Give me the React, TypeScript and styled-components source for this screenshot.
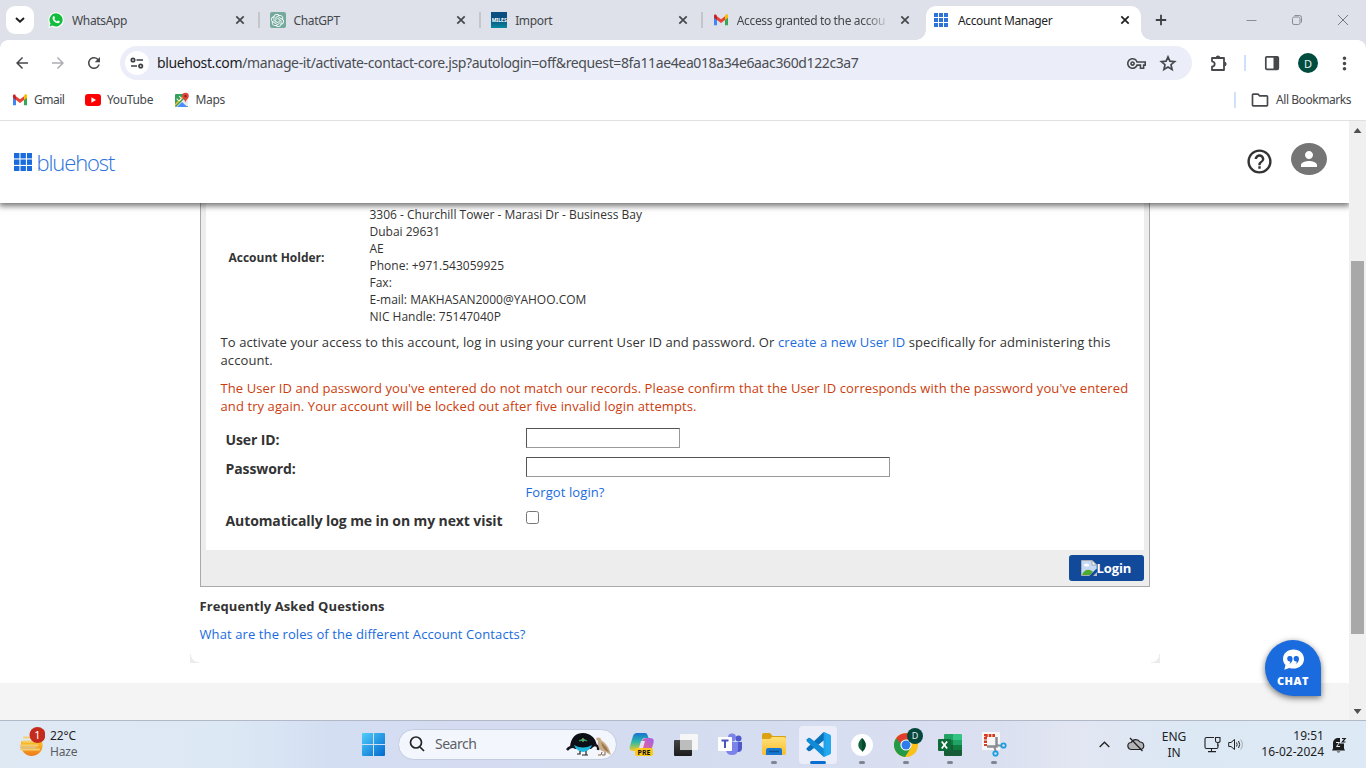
import React from "react";
import styled, { createGlobalStyle } from "styled-components";
import {
  MdArrowBack,
  MdArrowForward,
  MdRefresh,
  MdMoreVert,
  MdOutlineVpnKey,
  MdHelpOutline,
  MdPerson,
  MdOutlineFolder,
} from "react-icons/md";
import { SiOpenai } from "react-icons/si";

const Global = createGlobalStyle`
  * { box-sizing: border-box; }
  body { margin: 0; overflow: hidden; background: #fff; }
  svg { display: block; flex: none; }
`;

const Screen = styled.div`
  width: 1366px;
  height: 768px;
  display: flex;
  flex-direction: column;
  overflow: hidden;
  font-family: "Noto Sans", "Open Sans", sans-serif;
  color: #1f1f1f;
`;

const Label = styled.span<{ $size?: number; $ls?: number; $color?: string }>`
  font-size: ${(p) => p.$size ?? 12}px;
  letter-spacing: ${(p) => p.$ls ?? -0.35}px;
  color: ${(p) => p.$color ?? "#44474b"};
  white-space: nowrap;
  line-height: 16px;
`;

/* ---------- tab strip ---------- */
const TabStrip = styled.div`
  height: 40px;
  flex: none;
  display: flex;
  background: #dee1e9;
`;
const TabSearch = styled.div`
  width: 28px;
  height: 28px;
  margin: 6px 4px 0 6px;
  border-radius: 9px;
  background: #fff;
  display: grid;
  place-items: center;
`;
const Tab = styled.div`
  width: 221.6px;
  height: 40px;
  padding: 0 0 0 10px;
  display: flex;
  align-items: center;
  gap: 8px;
`;
const TabTitle = styled.div<{ $fade?: boolean; $w?: number }>`
  width: ${(p) => p.$w ?? 155}px;
  height: 18px;
  padding-top: 2px;
  display: flex;
  ${(p) => p.$fade && "-webkit-mask-image: linear-gradient(90deg, #000 82%, transparent 99%);"}
`;
const TabDivider = styled.i`
  width: 2px;
  height: 16px;
  margin-left: 5px;
  background: #c5c6c9;
`;
const ActiveTab = styled.div`
  position: relative;
  width: 215px;
  height: 34px;
  margin: 6px 0 0 1.6px;
  padding: 0 0 6px 8px;
  display: flex;
  align-items: center;
  gap: 10px;
  background: #fff;
  border-radius: 10px 10px 0 0;
  &::before,
  &::after {
    content: "";
    position: absolute;
    bottom: 0;
    width: 10px;
    height: 10px;
  }
  &::before {
    left: -10px;
    background: radial-gradient(circle at 0 0, #dee1e9 9.5px, #fff 10px);
  }
  &::after {
    right: -10px;
    background: radial-gradient(circle at 100% 0, #dee1e9 9.5px, #fff 10px);
  }
`;
const NewTab = styled.div`
  width: 40px;
  display: grid;
  place-items: center;
`;
const WindowButtons = styled.div`
  flex: 1;
  display: flex;
  justify-content: flex-end;
  align-items: center;
  gap: 34px;
  padding-right: 17px;
`;

/* ---------- toolbar ---------- */
const Toolbar = styled.div`
  height: 46px;
  flex: none;
  display: flex;
  align-items: center;
  padding-left: 13px;
  background:
    radial-gradient(circle at 8px 8px, #fff 7.5px, #dee1e9 8px) 0 0 / 8px 8px no-repeat,
    radial-gradient(circle at 0 8px, #fff 7.5px, #dee1e9 8px) 100% 0 / 8px 8px no-repeat,
    #fff;
`;
const NavIcons = styled.div`
  display: flex;
  gap: 18px;
  width: 107px;
  color: #46484b;
`;
const Omnibox = styled.div`
  width: 1072px;
  height: 34px;
  border-radius: 17px;
  background: #ebeef8;
  display: flex;
  align-items: center;
  padding: 0 15px 0 5px;
`;
const SiteInfo = styled.div`
  width: 24px;
  height: 24px;
  border-radius: 50%;
  background: #fff;
  display: grid;
  place-items: center;
  margin-right: 8px;
`;
const Url = styled.div`
  flex: 1;
  font-size: 14px;
  letter-spacing: -0.38px;
  line-height: 20px;
  white-space: nowrap;
  color: #4a4d52;
  b {
    font-weight: 400;
    color: #1c1d1f;
  }
`;
const OmniActions = styled.div`
  display: flex;
  align-items: center;
  gap: 13px;
  color: #46484b;
`;
const ToolbarActions = styled.div`
  flex: 1;
  display: flex;
  align-items: center;
  padding-left: 18px;
  color: #46484b;
`;
const BlueDivider = styled.i<{ $l: number; $r: number }>`
  width: 2px;
  height: 16px;
  margin: 0 ${(p) => p.$r}px 0 ${(p) => p.$l}px;
  background: #cfe0fb;
`;
const Avatar = styled.div`
  width: 20px;
  height: 20px;
  border-radius: 50%;
  background: #004d40;
  color: #e8f0ee;
  font-size: 11px;
  display: grid;
  place-items: center;
  margin: 0 15.5px 0 18px;
`;
const Bookmarks = styled.div`
  height: 35px;
  flex: none;
  display: flex;
  align-items: center;
  padding: 0 15px 7px 12px;
  border-bottom: 1px solid #dfe0e2;
`;
const Bookmark = styled.div<{ $width: number }>`
  width: ${(p) => p.$width}px;
  display: flex;
  align-items: center;
  gap: 6px;
`;
const AllBookmarks = styled.div`
  margin-left: auto;
  display: flex;
  align-items: center;
  color: #46484b;
  gap: 6px;
`;

/* ---------- page ---------- */
const Viewport = styled.div`
  height: 599px;
  flex: none;
  display: flex;
`;
const Page = styled.div`
  width: 1349px;
  height: 599px;
  display: flex;
  flex-direction: column;
  overflow: hidden;
  position: relative;
  font-family: "Open Sans", sans-serif;
  color: #333;
`;
const SiteHeader = styled.header`
  height: 82px;
  flex: none;
  position: relative;
  z-index: 1;
  display: flex;
  align-items: center;
  padding: 0 22px 0 14px;
  background: #fff;
  box-shadow: 0 2px 6px 1px rgba(0, 0, 0, 0.55);
`;
const Brand = styled.div`
  display: flex;
  align-items: center;
  gap: 4px;
  flex: 1;
`;
const BrandName = styled.span`
  font-family: "Open Sans", sans-serif;
  font-weight: 300;
  font-size: 22px;
  line-height: 26px;
  letter-spacing: -1.1px;
  color: #2a72dc;
`;
const UserBadge = styled.div`
  width: 36px;
  height: 32px;
  margin: 0 0 6px 17px;
  border-radius: 50%;
  background: #757575;
  color: #fff;
  display: grid;
  place-items: center;
`;
const HelpSlot = styled.div`
  padding-bottom: 2px;
`;
const Body = styled.main`
  height: 480px;
  flex: none;
  display: flex;
  flex-direction: column;
  align-items: center;
`;
const Card = styled.div`
  width: 970px;
  height: 460px;
  padding: 0 10px;
  background:
    radial-gradient(circle at 100% 0, #fff 8px, #ececec 8.5px) 0 100% / 9px 9px no-repeat,
    radial-gradient(circle at 0 0, #fff 8px, #ececec 8.5px) 100% 100% / 9px 9px no-repeat;
`;
const Panel = styled.section`
  height: 384px;
  border: 1px solid #a9a9a9;
  border-top: 0;
  background: #ededed;
  padding: 0 5px;
`;
const PanelInner = styled.div`
  height: 347px;
  background: #fff;
  padding: 3px 14px 0 15px;
`;
const Holder = styled.div`
  display: flex;
  align-items: center;
  height: 119px;
  padding-left: 8px;
  font-size: 12px;
  line-height: 17px;
`;
const HolderName = styled.div`
  width: 141px;
  font-weight: 700;
  padding-bottom: 17px;
`;
const Address = styled.div`
  white-space: nowrap;
`;
const Paragraph = styled.p<{ $error?: boolean }>`
  margin: ${(p) => (p.$error ? "10px 0 0" : "8px 0 0")};
  font-size: 13px;
  line-height: 18px;
  letter-spacing: 0.095px;
  white-space: nowrap;
  color: ${(p) => (p.$error ? "#cb3d0d" : "#333")};
`;
const Link = styled.a`
  color: #196bde;
`;
const FormRow = styled.div<{ $h: number }>`
  height: ${(p) => p.$h}px;
  display: flex;
  align-items: flex-start;
  padding-left: 5px;
`;
const Form = styled.form`
  padding-top: 13px;
`;
const FieldLabel = styled.label<{ $up?: number }>`
  width: 300px;
  padding-top: 2px;
  margin-top: ${(p) => -(p.$up ?? 0)}px;
  font-size: 14px;
  line-height: 19px;
  font-weight: 700;
  letter-spacing: -0.1px;
  white-space: nowrap;
`;
const Field = styled.input<{ $w: number }>`
  width: ${(p) => p.$w}px;
  height: 20px;
  margin: 0;
  padding: 0;
  background: #fff;
  border: 1px solid;
  border-color: #555 #999 #999 #555;
`;
const Forgot = styled(Link)`
  font-size: 13px;
  line-height: 18px;
  letter-spacing: 0.1px;
`;
const Check = styled.span`
  width: 13px;
  height: 13px;
  margin-top: -1px;
  border: 1px solid #767676;
  border-radius: 2.5px;
  background: #fff;
`;
const PanelFooter = styled.div`
  height: 36px;
  display: flex;
  justify-content: flex-end;
  padding-top: 5px;
`;
const LoginButton = styled.button`
  width: 75px;
  height: 26px;
  padding: 0 0 0 12px;
  border: 0;
  border-radius: 3px;
  background: #11499b;
  color: #fff;
  display: flex;
  align-items: center;
  font: 700 13px/18px "Open Sans", sans-serif;
  letter-spacing: -0.1px;
`;
const FaqTitle = styled.h3`
  margin: 10px 0 0;
  font-size: 13px;
  line-height: 18px;
  letter-spacing: 0.1px;
  font-weight: 700;
`;
const FaqLink = styled(Link)`
  display: block;
  margin-top: 10px;
  font-size: 13px;
  line-height: 18px;
  letter-spacing: 0.1px;
`;
const PageFooter = styled.footer`
  height: 37px;
  flex: none;
  background: #f4f4f4;
`;
const Chat = styled.div`
  position: absolute;
  left: 1265px;
  top: 519px;
  width: 56px;
  height: 56px;
  border-radius: 50% 50% 0 50%;
  background: #196bde;
  color: #fff;
  box-shadow: 0 2px 6px rgba(0, 0, 0, 0.55);
  display: flex;
  flex-direction: column;
  align-items: center;
  gap: 3px;
  padding-top: 9px;
  font-size: 11px;
  line-height: 14px;
  font-weight: 800;
  letter-spacing: 0.5px;
`;
const Scrollbar = styled.div`
  width: 17px;
  height: 599px;
  background: #f0f0f0;
  display: flex;
  flex-direction: column;
  align-items: center;
  padding: 7px 0 6px;
`;
const Thumb = styled.div`
  width: 13px;
  height: 373px;
  margin: 128px 0 auto;
  background: #a8a8a8;
`;
const Arrow = styled.i<{ $down?: boolean }>`
  width: 8px;
  height: 5px;
  background: #505050;
  clip-path: ${(p) => (p.$down ? "polygon(0 0, 100% 0, 50% 100%)" : "polygon(0 100%, 100% 100%, 50% 0)")};
`;

/* ---------- taskbar ---------- */
const Taskbar = styled.div`
  height: 48px;
  flex: none;
  display: flex;
  align-items: center;
  border-top: 1px solid #b1b8c8;
  background: linear-gradient(90deg, #dfe9f4 0, #dde8f5 230px, #d3def2 330px, #d5dcf1 450px, #d4dcf0 700px, #dbe0f1 1000px, #e2e6f2 1070px, #dce8f4 1180px, #dde9f4 100%);
`;
const Weather = styled.div`
  width: 351px;
  height: 36px;
  padding-left: 18px;
  display: flex;
  align-items: flex-start;
  gap: 5px;
`;
const Stack = styled.div<{ $align?: string; $w?: number; $t?: number; $b?: number }>`
  display: flex;
  flex-direction: column;
  padding: ${(p) => p.$t ?? 0}px 0 ${(p) => p.$b ?? 0}px;
  align-items: ${(p) => p.$align ?? "flex-start"};
  ${(p) => (p.$w ? `width: ${p.$w}px;` : "")}
`;
const SearchBox = styled.div`
  width: 219px;
  height: 31px;
  margin: 0 3px 1px;
  border-radius: 16px;
  border: 1px solid #c3cde0;
  background: #f3f6fc;
  display: flex;
  align-items: center;
  padding: 0 4px 0 10px;
  gap: 10px;
`;
const BirdSlot = styled.div`
  margin-left: auto;
`;
const Slot = styled.div<{ $active?: boolean }>`
  position: relative;
  width: 38px;
  height: 38px;
  margin: 0 3px;
  border-radius: 4px;
  display: grid;
  place-items: center;
  background: ${(p) => (p.$active ? "#ebeef8" : "transparent")};
`;
const Running = styled.i<{ $active?: boolean }>`
  position: absolute;
  bottom: 0;
  left: 50%;
  width: ${(p) => (p.$active ? 16 : 6)}px;
  height: 3px;
  border-radius: 2px;
  transform: translateX(-50%);
  background: ${(p) => (p.$active ? "#0a6fd0" : "#7f8490")};
`;
const ProfileDot = styled.div`
  position: absolute;
  left: 20px;
  top: 2px;
  width: 16px;
  height: 16px;
  border-radius: 50%;
  background: #04483d;
  color: #e3eeeb;
  font-size: 9px;
  display: grid;
  place-items: center;
`;
const Tray = styled.div`
  margin-left: auto;
  display: flex;
  align-items: center;
  padding-right: 12px;
`;
const TrayItem = styled.div<{ $w: number }>`
  width: ${(p) => p.$w}px;
  display: grid;
  place-items: center;
`;

/* ---------- icons ---------- */
const CloseX = ({ c = "#46484b" }: { c?: string }) => (
  <svg width="10" height="10" viewBox="0 0 10 10" stroke={c} strokeWidth="1.7">
    <path d="M1.3 1.3 8.7 8.7M8.7 1.3 1.3 8.7" />
  </svg>
);
const StarOutline = () => (
  <svg width="18" height="18" viewBox="0 0 18 18" fill="none" stroke="#46484b" strokeWidth="1.700">
    <path d="m9 2.800 1.900 4.400 4.700.4-3.600 3.100 1.100 4.700L9 12.900l-4.100 2.500L6 10.700 2.400 7.600l4.700-.4z" />
  </svg>
);
const Puzzle = () => (
  <svg width="18" height="18" viewBox="0 0 18 18">
    <path
      d="M2 4h12v12H2v-3.300c3.600-.6 3.600-4.800 0-5.400z"
      fill="none"
      stroke="#46484b"
      strokeWidth="1.800"
      strokeLinejoin="round"
    />
    <path d="M5.800 3.600a2.200 2.200 0 0 1 4.400 0zM14.400 7.800a2.200 2.200 0 0 1 0 4.400z" fill="#46484b" />
  </svg>
);
const WhatsApp = () => (
  <svg width="16" height="16" viewBox="0 0 16 16">
    <path d="M8 .3a7.7 7.7 0 0 0-6.6 11.6L.3 15.7l4-1A7.7 7.7 0 1 0 8 .3z" fill="#fff" />
    <path d="M8.1 1.3a6.6 6.6 0 0 0-5.6 10.1l-.9 3 3.1-.8A6.6 6.6 0 1 0 8.1 1.3z" fill="#12bd3e" />
    <path d="M5.2 4.400c.4-.4 1-.4 1.200.1l.5 1.200c.2.5-.5.9-.6 1.200.6 1.200 1.500 2 2.700 2.500.5-.2.8-1 1.300-.8l1.200.6c.5.3.4 1-.1 1.500-2 1.700-7.300-1.500-6.800-5 .1-.6.3-1 .6-1.300z" fill="#fff" />
  </svg>
);
const GptTile = styled.div`
  width: 16px;
  height: 16px;
  border-radius: 2px;
  background: #74aa9c;
  color: #fff;
  display: grid;
  place-items: center;
`;
const MilesTile = styled.div`
  width: 16px;
  height: 16px;
  background: linear-gradient(#07507f 0 45%, #08899d);
  color: #fff;
  font-size: 5px;
  line-height: 16px;
  font-weight: 700;
  text-align: center;
`;
const GmailLogo = ({ w = 15 }: { w?: number }) => (
  <svg width={w} height={16} viewBox="0 0 16 16">
    <path d="M1 5v8.200h3V7z" fill="#4285f4" />
    <path d="M12 7v6.200h3V5z" fill="#34a853" />
    <path d="M1 3.500v2.200l3 2.300V4.500L3.300 2.800C2.300 2.200 1 2.700 1 3.500z" fill="#c5221f" />
    <path d="M12 4.500V8l3-2.300V3.500c0-1.300-1.500-1.700-2.500-.8z" fill="#fbbc04" />
    <path d="M4 8V4.200l4 3 4-3V8l-4 3z" fill="#ea4335" />
  </svg>
);
const Grid9 = ({ s, g, c }: { s: number; g: number; c: string }) => {
  const n = s * 3 + g * 2;
  return (
    <svg width={n} height={n}>
      {[0, 1, 2].flatMap((r) =>
        [0, 1, 2].map((k) => <rect key={`${r}${k}`} x={k * (s + g)} y={r * (s + g)} width={s} height={s} fill={c} />)
      )}
    </svg>
  );
};
const YouTube = () => (
  <svg width="16" height="12" viewBox="0 0 16 12">
    <rect width="16" height="12" rx="3" fill="#f00" />
    <path d="M6.400 3.300v5.400L11 6z" fill="#fff" />
  </svg>
);
const MapsLogo = () => (
  <svg width="16" height="16" viewBox="0 0 16 16">
    <rect x="1" y="2" width="13" height="13" rx="1" fill="#34a05a" />
    <path d="M2 15 13 4l1 1v9z" fill="#e8eaed" />
    <path d="M1 12 11 2h2L1 14z" fill="#fbc02d" />
    <path d="m3 15 5-5 5.500 5z" fill="#4a8df8" />
    <path d="M3 6.500a2 2 0 1 0 2-2" fill="none" stroke="#fff" />
    <path d="M11.500.8a3.300 3.300 0 0 0-3.300 3.400c0 2.300 2.600 3 3.300 6.300.7-3.300 3.300-4 3.300-6.300A3.300 3.300 0 0 0 11.500.8z" fill="#df4438" />
    <circle cx="11.500" cy="4.200" r="1.100" fill="#7c1d17" />
  </svg>
);
const BrokenImage = () => (
  <svg width="16" height="16" viewBox="0 0 16 16">
    <path d="M.5.5H11L15.500 5v4L8.500 15.500H.5z" fill="#c6d8f4" stroke="#a9acb0" />
    <path d="M11 .5V5h4.500z" fill="#fff" stroke="#a0a4a8" />
    <path d="M1 15c1.500-5 7-7 11-3L9 15z" fill="#4eaa31" />
    <ellipse cx="5.500" cy="5" rx="2.700" ry="1.600" fill="#fff" />
    <path d="M15.500 8.800 8.500 16H11l5-5z" fill="#11499b" />
    <path d="M16 12v4h-4z" fill="#b9bcc0" />
  </svg>
);
const ChatBubble = () => (
  <svg width="23" height="22" viewBox="0 0 23 22">
    <path d="M11.500.5C5.500.5 1 4.500 1 10c0 2.700 1.200 4.700 2.500 6L2.300 20.800l5-1.800c1.300.4 2.700.6 4.200.6C17.500 19.600 22 15.500 22 10S17.500.5 11.500.5z" fill="#fff" />
    <path d="M10.600 9.500c0 3-1.300 4.800-3.500 5.500.9-1 1.300-1.800 1.300-2.600a2.700 2.700 0 1 1 2.200-2.900zM17 9.500c0 3-1.300 4.800-3.500 5.500.9-1 1.300-1.800 1.300-2.600A2.700 2.700 0 1 1 17 9.500z" fill="#196bde" />
  </svg>
);
const HazeIcon = () => (
  <svg width="27" height="31" viewBox="0 0 27 31">
    <defs>
      <linearGradient id="haze" x1="0" y1="0" x2="0" y2="1">
        <stop offset="0" stopColor="#fbc52b" />
        <stop offset="1" stopColor="#ef7a18" />
      </linearGradient>
    </defs>
    <path d="M3 14 23.500 13.500A10.800 10.800 0 1 1 3 19z" fill="url(#haze)" />
    <path d="M6 10.500h9M5 14.500h15M2.500 18.500h17M3 22.500h18" stroke="#f4cf72" strokeWidth="2" strokeLinecap="round" />
    <path d="M2 20.500h16" stroke="#d9c08c" strokeWidth="1.500" />
    <circle cx="19.500" cy="8" r="8" fill="#c42b1c" />
    <text x="19.500" y="12" textAnchor="middle" fontSize="11" fill="#fff" fontFamily="Noto Sans">1</text>
  </svg>
);
const WindowsLogo = () => (
  <svg width="23" height="23" viewBox="0 0 23 23">
    <defs>
      <linearGradient id="win" x1="0" y1="0" x2="1" y2="1">
        <stop offset="0" stopColor="#50cdfb" />
        <stop offset="1" stopColor="#0069cf" />
      </linearGradient>
    </defs>
    <path d="M1 0h10v11H0V1q0-1 1-1zM12 0h10q1 0 1 1v10H12zM0 12h11v11H1q-1 0-1-1zM12 12h11v10q0 1-1 1H12z" fill="url(#win)" />
  </svg>
);
const Birds = () => (
  <svg width="46" height="25" viewBox="0 0 46 25">
    <path d="M4 15C5 5 10 1 17 1s13 5 14 13c-3-1-4 2-6 3H9c-2-1-3-3-5-2z" fill="#0c0f16" />
    <path d="M1 18q3-4 7-3M28 13q5 0 4 5" stroke="#111620" strokeWidth="2.500" fill="none" />
    <path d="M8 13q9 5 18 0-2 6-9 7-7-1-9-7z" fill="#22b9dc" />
    <path d="m17 6 2 2-2 2-2-2z" fill="#d8d34a" />
    <path d="M13 9q4-2 8 0" stroke="#2a9d72" strokeWidth="1.300" fill="none" />
    <path d="M14 19v3h-3M20 19v4h-4M22 23h-3" stroke="#222" strokeWidth="1.200" fill="none" />
    <path d="M30 7c1-2 5-2 5 1 5 3 8 7 10 15-3-1-4-3-6-3-5-1-8-5-7-11z" fill="#c8ab87" />
    <path d="M35 10q5 4 8 10-6-1-8-10z" fill="#987654" />
    <path d="m36 20-1 3h-3M39 20v3h-3" stroke="#876445" fill="none" />
  </svg>
);
const Copilot = () => (
  <svg width="26" height="25" viewBox="0 0 26 25">
    <defs>
      <linearGradient id="cpa" x1="0" y1="0" x2="0" y2="1">
        <stop offset="0" stopColor="#1773d1" />
        <stop offset=".5" stopColor="#2db9a6" />
        <stop offset="1" stopColor="#f5cc26" />
      </linearGradient>
      <linearGradient id="cpb" x1="1" y1="0" x2="0" y2="1">
        <stop offset="0" stopColor="#a45df0" />
        <stop offset="1" stopColor="#ff6f61" />
      </linearGradient>
    </defs>
    <path d="M8 1h8q2 0 2.500 2l1 3h-4q-2 0-3 3l-2 7q-1 3-4 3H5c-4 0-5-2-4-5l3-10q1-3 4-3z" fill="url(#cpa)" />
    <path d="M18 6h3c4 0 4 3 3.500 5L22 19q-1 3-4 3H9q-2 0-2-2 3 0 4-4l2-7q1-3 5-3z" fill="url(#cpb)" />
    <path d="M12 9h4l-2 7h-4z" fill="#eadff6" />
    <rect x="6" y="16" width="18" height="8" rx="2" fill="#ffc91c" />
    <text x="15" y="22.600" textAnchor="middle" fontSize="7" fontWeight="700" fill="#111" fontFamily="Noto Sans">PRE</text>
  </svg>
);
const TaskView = () => (
  <svg width="24" height="24" viewBox="0 0 24 24">
    <defs>
      <linearGradient id="tv" x1="0" y1="0" x2="0" y2="1">
        <stop offset="0" stopColor="#444" />
        <stop offset="1" stopColor="#1c1c1c" />
      </linearGradient>
    </defs>
    <rect y="7" width="18" height="16" rx="1" fill="url(#tv)" />
    <rect x="6" y="1" width="18" height="16" rx="1" fill="#f6f6f6" />
    <path d="M6 7h12v10H6z" fill="#bcbdbd" />
  </svg>
);
const Teams = () => (
  <svg width="24" height="24" viewBox="0 0 24 24">
    <circle cx="20.500" cy="5.500" r="3" fill="#5059c9" />
    <circle cx="14" cy="4.500" r="4" fill="#7b83eb" />
    <path d="M17 9h7v6q0 4-4 4h-3z" fill="#5059c9" />
    <path d="M8 9h12v7q0 6-6 6t-6-6z" fill="#7b83eb" />
    <rect x="0" y="4" width="14" height="14" rx="1" fill="#fff" />
    <path d="M3.500 7.500h7M7 7.500V15" stroke="#4b53bc" strokeWidth="2" />
  </svg>
);
const Explorer = () => (
  <svg width="24" height="23" viewBox="0 0 24 23">
    <defs>
      <linearGradient id="ex" x1="0" y1="0" x2="0" y2="1">
        <stop offset="0" stopColor="#ffe07a" />
        <stop offset="1" stopColor="#f9bd2d" />
      </linearGradient>
    </defs>
    <path d="M0 2q0-2 2-2h6l2.500 3H23q1 0 1 1v8H0z" fill="#dba112" />
    <path d="M0 6h8l2-2h12q2 0 2 2v14q0 2-2 2H2q-2 0-2-2z" fill="url(#ex)" />
    <path d="M4 22v-5q0-2 2-2h12q2 0 2 2v5z" fill="#1577cf" />
    <path d="M7 18.500h10" stroke="#0b5394" strokeWidth="1.500" />
  </svg>
);
const VsCode = () => (
  <svg width="25" height="25" viewBox="0 0 24 24">
    <path d="M17 0v24l6-2.500q1-.5 1-1.500V4q0-1-1-1.500z" fill="#24a9f1" />
    <path d="M17 0 1 15l-.8 1.500L2.500 18.500 4 18.300 18 7.500z" fill="#0a70bb" />
    <path d="M17 24 1 9 .2 7.500 2.500 5.500 4 5.700 18 16.500z" fill="#128bd6" />
    <path d="M17 0v24l2-1V1z" fill="#1fa1ea" />
  </svg>
);
const Mongo = () => (
  <svg width="22" height="22" viewBox="0 0 22 22">
    <circle cx="11" cy="11" r="11" fill="#fff" />
    <path d="M11 4c2.500 2.500 3.700 4.500 3.700 7 0 2.700-1.700 4.500-3.700 6-2-1.500-3.700-3.300-3.700-6 0-2.500 1.200-4.500 3.700-7z" fill="#11633f" />
    <path d="M11 4v14c2-1.500 3.700-3.500 3.700-7 0-2.500-1.200-4.500-3.700-7z" fill="#054a2c" />
  </svg>
);
const Chrome = () => (
  <svg width="24" height="24" viewBox="0 0 24 24">
    <circle cx="12" cy="12" r="12" fill="#fbc116" />
    <path d="M1.600 6A12 12 0 0 0 11 24l6-9.500-5-2.500V6.500L3 5z" fill="#229a48" />
    <path d="M2.200 5A12 12 0 0 1 22.400 6.500H12a5.500 5.500 0 0 0-5.300 4.300z" fill="#e33b2e" />
    <circle cx="12" cy="12" r="5.600" fill="#fff" />
    <circle cx="12" cy="12" r="4.500" fill="#2f7cec" />
  </svg>
);
const Excel = () => (
  <svg width="24" height="22" viewBox="0 0 24 22">
    <path d="M6 1q0-1 1-1h8v6H6z" fill="#21a366" />
    <path d="M15 0h8q1 0 1 1v5h-9z" fill="#33c481" />
    <path d="M6 6h9v5H6z" fill="#107c41" />
    <path d="M15 6h9v5h-9z" fill="#21a366" />
    <path d="M6 11h18v10q0 1-1 1H7q-1 0-1-1z" fill="#185c37" />
    <path d="M15 11h9v5h-9z" fill="#107c41" />
    <rect y="5" width="13" height="12" rx="1" fill="#0d6b38" />
    <path d="m3.700 7.500 5.400 7M9.100 7.500l-5.400 7" stroke="#fff" strokeWidth="1.800" />
  </svg>
);
const Snip = () => (
  <svg width="25" height="25" viewBox="0 0 25 25">
    <rect width="18" height="18" rx="1" fill="#f7f7f8" />
    <path d="M13 3.500H3.500V14" fill="none" stroke="#d83b1c" strokeWidth="3" strokeDasharray="2.700 .9" />
    <path d="M14.500 5v9.500H5" fill="none" stroke="#8a8d91" strokeWidth="2.500" />
    <path d="m12 14 2 6M14 13l6 1" stroke="#8a8d91" strokeWidth="2" />
    <circle cx="21.500" cy="13.500" r="2.200" fill="none" stroke="#1b9de2" strokeWidth="1.800" />
    <circle cx="13.500" cy="21.500" r="2.200" fill="none" stroke="#1b9de2" strokeWidth="1.800" />
  </svg>
);

const tabs = [
  { title: "WhatsApp", icon: <WhatsApp /> },
  { title: "ChatGPT", icon: <GptTile><SiOpenai size={13} /></GptTile> },
  { title: "Import", icon: <MilesTile>MILES</MilesTile> },
  { title: "Access granted to the accou", icon: <GmailLogo w={16} />, fade: true },
];

const address = [
  "3306 - Churchill Tower - Marasi Dr - Business Bay",
  "Dubai 29631",
  "AE",
  "Phone: +971.543059925",
  "Fax:",
  "E-mail: MAKHASAN2000@YAHOO.COM",
  "NIC Handle: 75147040P",
];

const apps = [
  { id: "copilot", icon: <Copilot /> },
  { id: "taskview", icon: <TaskView /> },
  { id: "teams", icon: <Teams /> },
  { id: "explorer", icon: <Explorer />, running: true },
  { id: "code", icon: <VsCode />, running: true, active: true },
  { id: "mongo", icon: <Mongo />, running: true },
  { id: "chrome", icon: <Chrome />, running: true, badge: "D" },
  { id: "excel", icon: <Excel />, running: true },
  { id: "snip", icon: <Snip />, running: true },
];

export default function App() {
  return (
    <Screen>
      <Global />
      <TabStrip>
        <TabSearch>
          <svg width="10" height="6" viewBox="0 0 10 6" fill="none" stroke="#1f1f1f" strokeWidth="2">
            <path d="m1 1 4 3.700L9 1" />
          </svg>
        </TabSearch>
        {tabs.map((t, i) => (
          <Tab key={t.title}>
            {t.icon}
            <TabTitle $fade={t.fade}>
              <Label>{t.title}</Label>
            </TabTitle>
            <CloseX />
            {i < 3 && <TabDivider />}
          </Tab>
        ))}
        <ActiveTab>
          <Grid9 s={4} g={1} c="#2f73d9" />
          <TabTitle $w={152}>
            <Label $color="#1f1f1f">Account Manager</Label>
          </TabTitle>
          <CloseX c="#1f1f1f" />
        </ActiveTab>
        <NewTab>
          <svg width="12" height="12" viewBox="0 0 12 12" stroke="#3c3f43" strokeWidth="1.800">
            <path d="M6 .8v10.400M.8 6h10.400" />
          </svg>
        </NewTab>
        <WindowButtons>
          <svg width="11" height="12" viewBox="0 0 11 12" stroke="#8b8d92">
            <path d="M.5 6.500h10" />
          </svg>
          <svg width="12" height="12" viewBox="0 0 12 12" fill="none" stroke="#8b8d92">
            <rect x="1.500" y="3" width="7.500" height="7.500" rx="1.500" />
            <path d="M3.500 1.500h5q2 0 2 2v5" />
          </svg>
          <svg width="12" height="12" viewBox="0 0 12 12" stroke="#77797e">
            <path d="m1 1 10 10M11 1 1 11" />
          </svg>
        </WindowButtons>
      </TabStrip>

      <Toolbar>
        <NavIcons>
          <MdArrowBack size={18} />
          <MdArrowForward size={18} color="#adafb3" />
          <MdRefresh size={18} />
        </NavIcons>
        <Omnibox>
          <SiteInfo>
            <svg width="14" height="12" viewBox="0 0 14 12" fill="none" stroke="#3c3f43" strokeWidth="1.700">
              <circle cx="3" cy="3" r="1.700" />
              <path d="M6.500 3H13M1 9h6" />
              <circle cx="10.700" cy="9" r="1.700" />
            </svg>
          </SiteInfo>
          <Url>
            <b>bluehost.com</b>/manage-it/activate-contact-core.jsp?autologin=off&amp;request=8fa11ae4ea018a34e6aac360d122c3a7
          </Url>
          <OmniActions>
            <MdOutlineVpnKey size={19} />
            <StarOutline />
          </OmniActions>
        </Omnibox>
        <ToolbarActions>
          <Puzzle />
          <BlueDivider $l={16} $r={18} />
          <svg width="16" height="16" viewBox="0 0 16 16">
            <rect x="1.800" y="1.800" width="12.500" height="12.500" rx="1" fill="none" stroke="#46484b" strokeWidth="1.700" />
            <path d="M9.500 1.500H14v13H9.500z" fill="#46484b" />
          </svg>
          <Avatar>D</Avatar>
          <MdMoreVert size={21} />
        </ToolbarActions>
      </Toolbar>

      <Bookmarks>
        <Bookmark $width={73}>
          <GmailLogo w={16} />
          <Label $ls={-0.5}>Gmail</Label>
        </Bookmark>
        <Bookmark $width={88.5}>
          <YouTube />
          <Label>YouTube</Label>
        </Bookmark>
        <Bookmark $width={80}>
          <MapsLogo />
          <Label>Maps</Label>
        </Bookmark>
        <AllBookmarks>
          <BlueDivider $l={0} $r={8} />
          <MdOutlineFolder size={20} />
          <Label $ls={-0.45}>All Bookmarks</Label>
        </AllBookmarks>
      </Bookmarks>

      <Viewport>
        <Page>
          <SiteHeader>
            <Brand>
              <Grid9 s={5.400} g={1.100} c="#196bde" />
              <BrandName>bluehost</BrandName>
            </Brand>
            <HelpSlot>
              <MdHelpOutline size={29} color="#333" />
            </HelpSlot>
            <UserBadge>
              <MdPerson size={24} />
            </UserBadge>
          </SiteHeader>
          <Body>
            <Card>
              <Panel>
                <PanelInner>
                  <Holder>
                    <HolderName>Account Holder:</HolderName>
                    <Address>
                      {address.map((line) => (
                        <div key={line}>{line}</div>
                      ))}
                    </Address>
                  </Holder>
                  <Paragraph>
                    To activate your access to this account, log in using your current User ID and password. Or{" "}
                    <Link>create a new User ID</Link> specifically for administering this
                    <br />
                    account.
                  </Paragraph>
                  <Paragraph $error>
                    The User ID and password you've entered do not match our records. Please confirm that the User ID
                    corresponds with the password you've entered
                    <br />
                    and try again. Your account will be locked out after five invalid login attempts.
                  </Paragraph>
                  <Form>
                    <FormRow $h={29}>
                      <FieldLabel>User ID:</FieldLabel>
                      <Field $w={154} />
                    </FormRow>
                    <FormRow $h={26}>
                      <FieldLabel>Password:</FieldLabel>
                      <Field $w={364} />
                    </FormRow>
                    <FormRow $h={29}>
                      <FieldLabel />
                      <Forgot>Forgot login?</Forgot>
                    </FormRow>
                    <FormRow $h={24}>
                      <FieldLabel as="span" $up={3}>Automatically log me in on my next visit</FieldLabel>
                      <Check />
                    </FormRow>
                  </Form>
                </PanelInner>
                <PanelFooter>
                  <LoginButton type="button">
                    <BrokenImage />
                    Login
                  </LoginButton>
                </PanelFooter>
              </Panel>
              <FaqTitle>Frequently Asked Questions</FaqTitle>
              <FaqLink>What are the roles of the different Account Contacts?</FaqLink>
            </Card>
          </Body>
          <PageFooter />
          <Chat>
            <ChatBubble />
            CHAT
          </Chat>
        </Page>
        <Scrollbar>
          <Arrow />
          <Thumb />
          <Arrow $down />
        </Scrollbar>
      </Viewport>

      <Taskbar>
        <Weather>
          <HazeIcon />
          <Stack $t={1}>
            <Label $color="#1f1f1f" $ls={-0.1}>22°C</Label>
            <Label $color="#5a5d63" $ls={-0.2}>Haze</Label>
          </Stack>
        </Weather>
        <Slot>
          <WindowsLogo />
        </Slot>
        <SearchBox>
          <svg width="16" height="16" viewBox="0 0 16 16" fill="none" stroke="#222" strokeWidth="1.700">
            <circle cx="7" cy="6.500" r="5.500" />
            <path d="m11 11 4 4" />
          </svg>
          <Label $size={14} $ls={-0.5} $color="#5c5f66">Search</Label>
          <BirdSlot>
            <Birds />
          </BirdSlot>
        </SearchBox>
        {apps.map((a) => (
          <Slot key={a.id} $active={a.active}>
            {a.icon}
            {a.badge && <ProfileDot>{a.badge}</ProfileDot>}
            {a.running && <Running $active={a.active} />}
          </Slot>
        ))}
        <Tray>
          <TrayItem $w={32}>
            <svg width="11" height="7" viewBox="0 0 11 7" fill="none" stroke="#222" strokeWidth="1.300">
              <path d="m.7 6 4.800-4.800L10.300 6" />
            </svg>
          </TrayItem>
          <TrayItem $w={32}>
            <svg width="18" height="15" viewBox="0 0 18 15">
              <path d="M4.500 12.500a3.500 3.500 0 0 1-.3-7A5 5 0 0 1 13 5a3.800 3.800 0 0 1 .8 7.500z" fill="#b2b4b8" stroke="#222" strokeWidth="1.200" />
              <path d="m3 1 12.500 13" stroke="#222" strokeWidth="1.300" />
            </svg>
          </TrayItem>
          <TrayItem $w={44}>
            <Stack $align="center">
              <Label $color="#1f1f1f" $ls={0}>ENG</Label>
              <Label $color="#1f1f1f" $ls={0}>IN</Label>
            </Stack>
          </TrayItem>
          <TrayItem $w={32}>
            <svg width="17" height="17" viewBox="0 0 17 17" fill="none" stroke="#222" strokeWidth="1.100">
              <path d="M10 1.500H2.500q-1.500 0-1.500 1.500v8q0 1.500 1.500 1.500h10q1.500 0 1.500-1.500V8.500M7.500 12.500v3M4 15.600h8" />
              <path d="M11.500 1.500h4.500v3.500q0 1.500-2.200 1.500T11.500 5zM13.800 6.500V10" />
            </svg>
          </TrayItem>
          <TrayItem $w={16}>
            <svg width="16" height="13" viewBox="0 0 16 13" fill="none" stroke="#222">
              <path d="M.7 4.500v4H3l3.500 3V1.500L3 4.500z" />
              <path d="M8.500 4.500q1.300 2 0 4M10.500 3q2.400 3.500 0 7" />
              <path d="M12.700 1.500q3.500 5 0 10" stroke="#a5abb3" />
            </svg>
          </TrayItem>
          <Stack $align="flex-end" $w={80} $b={1}>
            <Label $color="#1f1f1f" $ls={0}>19:51</Label>
            <Label $color="#1f1f1f" $ls={0}>16-02-2024</Label>
          </Stack>
          <TrayItem $w={30}>
            <svg width="16" height="16" viewBox="0 0 16 16">
              <path d="M1 13.500 2 11.500V6a5 5 0 0 1 5-5h2v5.500h4v5l1 2z" fill="#1c1c1c" />
              <path d="M5.500 14.500h4q-2 2-4 0z" fill="#1c1c1c" />
              <path d="M5 5.500h3.500L5.500 9.500h3.500" stroke="#e4ebf4" fill="none" />
              <path d="M11 1.500h3.200L11.300 5h3.200" stroke="#1c1c1c" strokeWidth="1.200" fill="none" />
            </svg>
          </TrayItem>
        </Tray>
      </Taskbar>
    </Screen>
  );
}
